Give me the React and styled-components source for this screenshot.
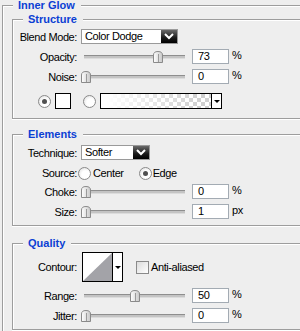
import styled, { createGlobalStyle } from "styled-components";

const GlobalStyle = createGlobalStyle`
  *, *::before, *::after { box-sizing: border-box; }
  html, body { margin: 0; padding: 0; background: #eeeeee; overflow: hidden; }
  body {
    font-family: "Liberation Sans", Arial, sans-serif;
    font-size: 11px;
    letter-spacing: -0.4px;
    color: #000;
  }
`;

const Page = styled.div`
  width: 300px;
  height: 331px;
  overflow: hidden;
  padding-left: 2px;
`;

const Group = styled.section`
  display: flex;
  flex-direction: column;
  width: ${(p) => p.$width}px;
  margin-top: ${(p) => p.$mt || 0}px;
`;

const Header = styled.div`
  display: flex;
  height: 11px;
`;

const Lead = styled.div`
  width: 11px;
  margin-top: 5px;
  border-top: 1px solid #9d9d9d;
  border-left: 1px solid #9d9d9d;
  box-shadow: inset 1px 1px 0 #fff;
`;

const Title = styled.div`
  padding: 0 6px 0 5px;
  font-weight: bold;
  font-size: 11px;
  line-height: 11px;
  letter-spacing: 0;
  color: #0b3fd4;
`;

const Tail = styled.div`
  flex: 1;
  margin-top: 5px;
  border-top: 1px solid #9d9d9d;
  border-right: 1px solid #9d9d9d;
  box-shadow: inset 0 1px 0 #fff;
`;

const Body = styled.div`
  display: flex;
  flex-direction: column;
  border: 1px solid #9d9d9d;
  border-top: none;
  box-shadow: inset 1px 0 0 #fff, 0 1px 0 #fff;
  padding: ${(p) => p.$pad};
`;

const Row = styled.div`
  display: flex;
  align-items: center;
  height: ${(p) => p.$h || 15}px;
  margin-top: ${(p) => p.$mt || 0}px;
  margin-left: ${(p) => p.$ml || 0}px;
`;

const Label = styled.div`
  width: 64px;
  margin-right: 4px;
  text-align: right;
  white-space: nowrap;
`;

const Select = styled.div`
  display: flex;
  width: ${(p) => p.$w}px;
  height: 15px;
  border: 1px solid #9a9a9a;
  background: #fff;
`;

const SelectText = styled.span`
  flex: 1;
  padding-left: 3px;
  line-height: 13px;
`;

const DarkArrow = styled.span`
  width: 16px;
  display: flex;
  align-items: center;
  justify-content: center;
  background: linear-gradient(#6a6a6a, #1a1a1a 60%, #000);
`;

const SliderBox = styled.div`
  position: relative;
  width: 111px;
  height: 15px;
  display: flex;
  align-items: center;
`;

const Track = styled.div`
  margin-left: 3px;
  width: 101px;
  height: 4px;
  border-top: 1px solid #8e8e8e;
  border-bottom: 1px solid #dcdcdc;
  background: #c4c4c4;
`;

const Thumb = styled.svg`
  position: absolute;
  top: 2px;
`;

const Field = styled.div`
  width: 37px;
  height: 15px;
  border: 1px solid #a3abb3;
  background: #fff;
  padding-left: 5px;
  line-height: 13px;
`;

const Unit = styled.span`
  align-self: flex-start;
  margin-left: 3px;
  margin-top: 1px;
  line-height: 11px;
`;

const RadioDot = styled.span`
  width: 13px;
  height: 13px;
  border-radius: 50%;
  border: 1px solid #8a8a8a;
  background: radial-gradient(circle at 60% 60%, #fff 40%, #d8d8d8);
  display: flex;
  align-items: center;
  justify-content: center;
  margin-left: ${(p) => p.$ml || 0}px;
  margin-right: ${(p) => p.$mr || 0}px;
  &::after {
    content: "";
    width: 5px;
    height: 5px;
    border-radius: 50%;
    background: ${(p) => (p.$on ? "#505050" : "transparent")};
  }
`;

const Swatch = styled.span`
  width: 16px;
  height: 16px;
  margin-left: 4px;
  border: 1px solid #000;
  background: #fff;
`;

const GradientBox = styled.div`
  display: flex;
  width: 122px;
  height: 16px;
  margin-left: 4px;
  border: 1px solid #000;
`;

const GradientFill = styled.div`
  flex: 1;
  background: linear-gradient(to right, #fff 5%, rgba(255, 255, 255, 0) 90%),
    repeating-conic-gradient(#d0d0d0 0 25%, #fff 0 50%) 0 0 / 8px 8px;
`;

const SmallArrow = styled.div`
  width: 10px;
  border-left: 1px solid #000;
  background: #fff;
  display: flex;
  align-items: center;
  justify-content: center;
  &::after {
    content: "";
    border-left: 3px solid transparent;
    border-right: 3px solid transparent;
    border-top: 3px solid #000;
  }
`;

const ContourBox = styled.div`
  display: flex;
  width: 41px;
  height: 30px;
  margin-left: 1px;
  border: 1px solid #000;
  background: #fff;
`;

const ContourPreview = styled.svg`
  display: block;
`;

const CheckBox = styled.span`
  width: 13px;
  height: 13px;
  margin-left: 13px;
  margin-right: 2px;
  border: 1px solid #8a8a8a;
  background: linear-gradient(135deg, #dcdcdc, #fff);
`;

const Slider = ({ value }) => (
  <SliderBox>
    <Track />
    <Thumb width="10" height="12" viewBox="0 0 10 12" style={{ left: 4 + value * 0.99 - 4.5 }}>
      <defs>
        <linearGradient id="tg" x1="0" x2="1">
          <stop offset="0" stopColor="#ffffff" />
          <stop offset="1" stopColor="#c8c8c8" />
        </linearGradient>
      </defs>
      <path d="M0.5 11.5 V4 Q0.5 0.5 5 0.5 Q9.5 0.5 9.5 4 V11.5 Z" fill="url(#tg)" stroke="#8a8a8a" />
      <line x1="5.5" y1="3" x2="5.5" y2="11" stroke="#9a9a9a" />
    </Thumb>
  </SliderBox>
);

const SliderRow = ({ label, value, unit, mt }) => (
  <Row $mt={mt}>
    <Label>{label}</Label>
    <Slider value={value} />
    <Field>{value}</Field>
    <Unit>{unit}</Unit>
  </Row>
);

const Chevron = () => (
  <svg width="10" height="7" viewBox="0 0 10 7">
    <polyline points="1,1 5,5 9,1" fill="none" stroke="#fff" strokeWidth="2" />
  </svg>
);

const Box = ({ title, children, pad, width, mt }) => (
  <Group $width={width} $mt={mt}>
    <Header>
      <Lead />
      <Title>{title}</Title>
      <Tail />
    </Header>
    <Body $pad={pad}>{children}</Body>
  </Group>
);

export default function App() {
  return (
    <Page>
      <GlobalStyle />
      <Box title="Inner Glow" width={330} pad="3px 0 40px 9px">
        <Box title="Structure" width={310} pad="4px 0 9px 0">
          <Row>
            <Label>Blend Mode:</Label>
            <Select $w={97}>
              <SelectText>Color Dodge</SelectText>
              <DarkArrow>
                <Chevron />
              </DarkArrow>
            </Select>
          </Row>
          <SliderRow label="Opacity:" value={73} unit="%" mt={5} />
          <SliderRow label="Noise:" value={0} unit="%" mt={5} />
          <Row $h={16} $mt={9} $ml={25}>
            <RadioDot $on />
            <Swatch />
            <RadioDot $ml={12} />
            <GradientBox>
              <GradientFill />
              <SmallArrow />
            </GradientBox>
          </Row>
        </Box>

        <Box title="Elements" width={310} pad="5px 0 6px 0" mt={10}>
          <Row>
            <Label>Technique:</Label>
            <Select $w={69}>
              <SelectText>Softer</SelectText>
              <DarkArrow>
                <Chevron />
              </DarkArrow>
            </Select>
          </Row>
          <Row $h={14} $mt={6}>
            <Label>Source:</Label>
            <RadioDot $ml={-3} $mr={2} />
            Center
            <RadioDot $ml={15} $mr={1} $on />
            Edge
          </Row>
          <SliderRow label="Choke:" value={0} unit="%" mt={4} />
          <SliderRow label="Size:" value={1} unit="px" mt={5} />
        </Box>

        <Box title="Quality" width={310} pad="3px 0 6px 0" mt={12}>
          <Row $h={30}>
            <Label>Contour:</Label>
            <ContourBox>
              <ContourPreview width="29" height="28" viewBox="0 0 29 28">
                <polygon points="0,28 29,0 29,28" fill="#a3a3a8" />
              </ContourPreview>
              <SmallArrow />
            </ContourBox>
            <CheckBox />
            Anti-aliased
          </Row>
          <SliderRow label="Range:" value={50} unit="%" mt={6} />
          <SliderRow label="Jitter:" value={0} unit="%" mt={5} />
        </Box>
      </Box>
    </Page>
  );
}
